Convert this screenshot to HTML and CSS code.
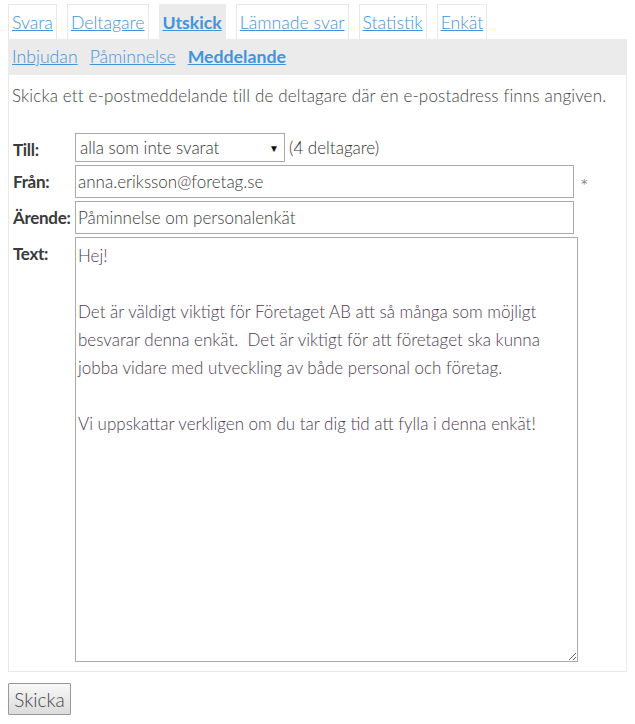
FILE: index.html
```html
<!DOCTYPE html>
<html lang="sv">
<head>
<meta charset="utf-8">
<title>Utskick</title>
<link rel="stylesheet" href="styles.css">
</head>
<body>
<nav class="tabs">
  <a class="tab" href="#">Svara</a>
  <a class="tab" href="#">Deltagare</a>
  <a class="tab active" href="#">Utskick</a>
  <a class="tab" href="#">Lämnade svar</a>
  <a class="tab" href="#">Statistik</a>
  <a class="tab" href="#">Enkät</a>
</nav>
<nav class="subnav">
  <a href="#">Inbjudan</a>
  <a href="#">Påminnelse</a>
  <a class="active" href="#">Meddelande</a>
</nav>
<section class="panel">
  <p class="intro">Skicka ett e-postmeddelande till de deltagare där en e-postadress finns angiven.</p>
  <form class="form">
    <label class="lbl">Till:</label>
    <div class="field">
      <div class="select"><span>alla som inte svarat</span><span class="arrow">▼</span></div>
      <span class="count">(4 deltagare)</span>
    </div>
    <label class="lbl">Från:</label>
    <div class="field">
      <input class="input" type="text" value="anna.eriksson@foretag.se">
      <span class="req">*</span>
    </div>
    <label class="lbl">Ärende:</label>
    <div class="field">
      <input class="input" type="text" value="Påminnelse om personalenkät">
    </div>
    <label class="lbl">Text:</label>
    <div class="field">
      <textarea class="textarea">Hej!

Det är väldigt viktigt för Företaget AB att så många som möjligt besvarar denna enkät.  Det är viktigt för att företaget ska kunna jobba vidare med utveckling av både personal och företag.

Vi uppskattar verkligen om du tar dig tid att fylla i denna enkät!</textarea>
    </div>
  </form>
</section>
<button class="btn" type="button">Skicka</button>
</body>
</html>
```
FILE: styles.css
```css
html, body {
  margin: 0;
  background: #fff;
}
body {
  padding: 4px 8px 8px;
  font-family: "Lato", "Open Sans", sans-serif;
  font-weight: 300;
  color: #444;
  font-size: 17px;
}
a {
  color: #3f94e2;
}
.tabs {
  display: flex;
  gap: 10px;
}
.tab {
  display: block;
  height: 34px;
  line-height: 36px;
  padding: 0 3px;
  border: 1px solid #e8e8e8;
  border-bottom: none;
  font-size: 17.7px;
}
.tab.active {
  background: #ebebeb;
  border-color: #ebebeb;
  font-weight: 700;
}
.subnav {
  display: flex;
  gap: 12px;
  height: 36px;
  line-height: 36px;
  background: #ebebeb;
  padding-left: 4px;
  font-size: 17.7px;
}
.subnav .active {
  font-weight: 700;
}
.panel {
  border: 1px solid #e8e8e8;
  border-top: none;
  padding: 0 3px 9px;
}
.intro {
  margin: 0;
  padding-top: 9px;
  font-size: 17px;
  letter-spacing: 0.15px;
  line-height: 24px;
  height: 49px;
}
.form {
  display: grid;
  grid-template-columns: 63px 1fr;
  row-gap: 3px;
  align-items: start;
}
.lbl {
  font-weight: 700;
  color: #3a3a3a;
  padding: 6px 0 0 1px;
  font-size: 17px;
  line-height: 22px;
  letter-spacing: -0.3px;
}
.field {
  display: flex;
  align-items: center;
  gap: 4px;
}
.select {
  box-sizing: border-box;
  width: 210px;
  height: 29px;
  border: 1px solid #aaa;
  display: flex;
  align-items: center;
  justify-content: space-between;
  padding: 0 5px 0 4px;
  font-size: 17px;
  color: #333;
}
.arrow {
  font-size: 10px;
  color: #111;
}
.count {
  font-size: 17px;
  color: #333;
}
.input {
  box-sizing: border-box;
  width: 499px;
  height: 33px;
  border: 1px solid #aaa;
  border-radius: 0;
  padding: 0 2px;
  font-family: inherit;
  font-weight: 300;
  font-size: 17px;
  color: #3a3a3a;
  margin: 0;
}
.req {
  font-family: "DejaVu Sans", sans-serif;
  font-weight: 400;
  font-size: 13px;
  line-height: 1;
  color: #888;
  margin-left: 3px;
  padding-top: 4px;
}
.textarea {
  box-sizing: border-box;
  width: 503px;
  height: 425px;
  border: 1px solid #aaa;
  border-radius: 0;
  padding: 4px 2px;
  margin: 0;
  font-family: inherit;
  font-weight: 300;
  font-size: 17px;
  line-height: 28px;
  color: #4e3b52;
  resize: both;
}
.btn {
  display: block;
  margin-top: 11px;
  width: 63px;
  height: 32px;
  border: 1px solid #999;
  border-radius: 1px;
  background: linear-gradient(#f8f8f8, #dcdcdc);
  font-family: inherit;
  font-weight: 300;
  font-size: 19px;
  color: #444;
  padding: 0;
}
```
